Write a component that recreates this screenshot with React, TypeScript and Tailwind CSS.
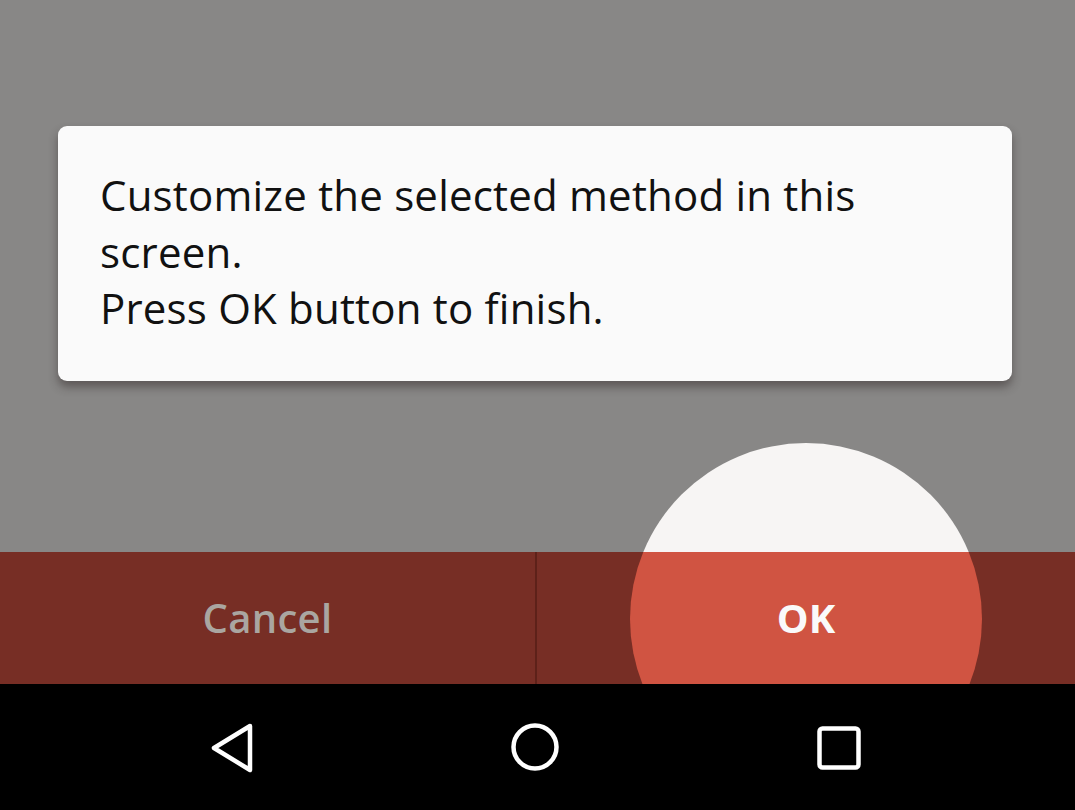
import React from "react";

export default function App() {
  return (
    <div
      className="relative w-[1075px] h-[810px] overflow-hidden bg-[#888786] flex flex-col"
      style={{ fontFamily: '"Open Sans", "Noto Sans", sans-serif' }}
    >
      <div className="h-[552px] shrink-0 pt-[126px]">
        <div className="ml-[58px] w-[954px] rounded-[9px] bg-[#fafafa] pl-[42px] pr-[20px] pt-[41px] pb-[44px] shadow-[0_6px_10px_rgba(40,30,30,0.45)]">
          <p className="text-[42px] leading-[56.5px] tracking-[0.2px] text-[#111111] whitespace-nowrap">
            Customize the selected method in this
            <br />
            screen.
            <br />
            Press OK button to finish.
          </p>
        </div>
      </div>

      {/* ripple top part */}
      <div className="absolute left-[630px] top-[443px] w-[352px] h-[352px] rounded-full bg-[#f7f5f4]" />

      <div className="relative z-10 h-[132px] shrink-0 flex bg-[#772e25] overflow-hidden">
        <div className="absolute left-[630px] top-[-109px] w-[352px] h-[352px] rounded-full bg-[#d05442]" />
        <div className="relative w-[535px] flex items-center justify-center">
          <span className="text-[40px] font-semibold text-[#aaa6a1] tracking-[0.3px]">Cancel</span>
        </div>
        <div className="relative w-[2px] bg-[#5d2119]" />
        <div className="relative flex-1 flex items-center justify-center">
          <span className="text-[40px] font-bold text-[#fafafa]">OK</span>
        </div>
      </div>

      <div className="relative z-10 flex-1 bg-black flex items-center">
        <div className="absolute left-[208px] top-[38px]">
          <svg width="48" height="52" viewBox="0 0 48 52" fill="none">
            <path d="M42 4 L6 26 L42 48 Z" stroke="white" strokeWidth="4.5" strokeLinejoin="round" />
          </svg>
        </div>
        <div className="absolute left-[510px] top-[38px]">
          <svg width="50" height="50" viewBox="0 0 50 50" fill="none">
            <circle cx="25" cy="25" r="21.5" stroke="white" strokeWidth="4.5" />
          </svg>
        </div>
        <div className="absolute left-[816px] top-[41px]">
          <svg width="46" height="46" viewBox="0 0 46 46" fill="none">
            <rect x="3.5" y="3.5" width="39" height="39" rx="3" stroke="white" strokeWidth="4.5" />
          </svg>
        </div>
      </div>
    </div>
  );
}
